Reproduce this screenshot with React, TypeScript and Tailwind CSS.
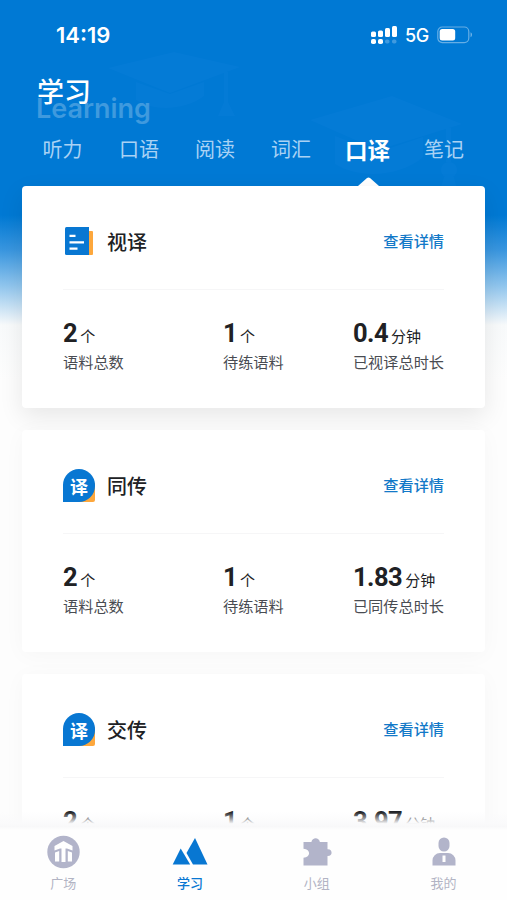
import clsx from 'clsx';

const tabs = [
  { name: '听力', pos: 'w-[77px]' },
  { name: '口语', pos: 'w-[76px]' },
  { name: '阅读', pos: 'w-[76px]' },
  { name: '词汇', pos: 'w-[76px]' },
  { name: '口译', pos: 'w-[77px]' },
  { name: '笔记', pos: 'w-[76px]' },
];

const cards = [
  { title: '视译', icon: 'doc', minutes: '0.4', label: '已视译总时长' },
  { title: '同传', icon: 'bubble', minutes: '1.83', label: '已同传总时长' },
  { title: '交传', icon: 'bubble', minutes: '3.97', label: '已交传总时长' },
];

function StatusBar() {
  return (
    <div className="flex h-[70px] items-center justify-between pl-14 pr-[34px] text-white">
      <p className="font-[Inter] text-[22px] font-semibold leading-none">
        14:19
      </p>
      <div className="flex items-center">
        <svg width="27" height="20" viewBox="0 0 27 20" fill="currentColor">
          <rect x="0" y="6.5" width="5" height="5.5" rx="1.5" />
          <rect x="7" y="5.5" width="5" height="6.5" rx="1.5" />
          <rect x="14" y="3" width="5" height="9" rx="1.5" />
          <rect x="21" y="1" width="5" height="11" rx="1.5" />
          <rect x="0" y="14" width="5" height="5" rx="1.8" />
          <rect x="7" y="14" width="5" height="5" rx="1.8" />
          <rect x="14" y="14.5" width="4.5" height="4" rx="1.8" opacity=".25" />
          <rect x="21" y="14.5" width="4.5" height="4" rx="1.8" opacity=".25" />
        </svg>
        <p className="ml-[7px] w-[26px] pt-px font-[Inter] text-[18px] font-medium leading-none tracking-[-0.3px]">
          5G
        </p>
        <svg className="ml-[6px]" width="36" height="18" viewBox="0 0 36 18">
          <rect
            x=".8"
            y="1"
            width="31"
            height="15.6"
            rx="4.5"
            fill="none"
            stroke="#fff"
            strokeOpacity=".4"
            strokeWidth="1.2"
          />
          <rect x="2.7" y="3" width="15.5" height="11.6" rx="2.5" fill="#fff" />
          <path d="M33.6 6.3c1.7.7 1.7 4.3 0 5z" fill="#fff" opacity=".5" />
        </svg>
      </div>
    </div>
  );
}

// faint graduation caps behind the header
function HeaderPattern() {
  return (
    <svg
      className="absolute left-0 top-0"
      width="507"
      height="230"
      viewBox="0 0 507 230"
      fill="#2b8df0"
    >
      <g opacity=".1">
        <path d="M108 68 174 52l66 15-70 26z" />
        <path d="M136 82v18c18 12 50 10 68-4V82l-34 12z" />
        <path d="M224 72h4v30l7 14h-17l6-14z" />
        <path d="m310 120 82-24 70 28-84 26z" />
        <path d="M335 136v28c25 16 67 12 88-7v-20l-45 15z" />
        <path d="M446 128h5v34h-5z" />
        <circle cx="449" cy="170" r="8" />
        <path d="m444 177-6 20h21l-5-20z" />
      </g>
    </svg>
  );
}

function DocIcon() {
  return (
    <svg width="32" height="32" viewBox="0 0 32 32">
      <path d="M23 6h6a1 1 0 0 1 1 1v22a1 1 0 0 1-1 1h-6z" fill="#fda73c" />
      <path
        d="M3.500 2H26v28H3.500A1.500 1.500 0 0 1 2 28.500v-25A1.500 1.500 0 0 1 3.500 2z"
        fill="#0877d2"
      />
      <path
        d="M6.500 10.800h6M6.500 17.300h14.500M6.500 23.600h8"
        stroke="#fff"
        strokeWidth="2.200"
      />
    </svg>
  );
}

function BubbleIcon() {
  return (
    <div className="flex h-[33px] w-8 items-center justify-center rounded-[2px] bg-[linear-gradient(135deg,transparent_70%,#fda73c_70%)]">
      <div className="flex h-[33px] w-8 items-center justify-center rounded-full rounded-bl-[3px] bg-[#0877d2]">
        <span className="pt-[2px] text-[18px] font-bold leading-none text-white">
          译
        </span>
      </div>
    </div>
  );
}

function Stat({
  value,
  unit,
  label,
}: {
  value: string;
  unit: string;
  label: string;
}) {
  return (
    <div>
      <p className="flex h-[30px] items-baseline gap-[3px] text-[#202124]">
        <span className="font-[Roboto] text-[25.5px] font-bold leading-[30px] tracking-[-0.5px]">
          {value}
        </span>
        <span className="text-[15px] leading-none">{unit}</span>
      </p>
      <p className="mt-[3px] whitespace-nowrap text-[15.2px] leading-5 text-[#494c52]">
        {label}
      </p>
    </div>
  );
}

function Card({ card, first }: { card: (typeof cards)[0]; first: boolean }) {
  return (
    <div
      className={clsx(
        'relative h-[222px] shrink-0 rounded-[4px] bg-white px-[41px]',
        first
          ? 'shadow-[0_8px_24px_rgba(0,0,0,0.09)]'
          : 'shadow-[0_3px_22px_rgba(0,0,0,0.03)]',
      )}
    >
      <div className="flex h-[104px] items-center justify-between border-b border-[#f6f6f7] pt-[7px]">
        <div className="flex items-center gap-3">
          {card.icon === 'doc' ? <DocIcon /> : <BubbleIcon />}
          <p className="pt-px text-[20px] font-medium leading-7 text-[#202124]">
            {card.title}
          </p>
        </div>
        <p className="pb-[2px] text-[15.200px] font-medium text-[#1379c8]">
          查看详情
        </p>
      </div>
      <div className="flex pt-[28px]">
        <div className="w-[160px]">
          <Stat value="2" unit="个" label="语料总数" />
        </div>
        <div className="w-[130px]">
          <Stat value="1" unit="个" label="待练语料" />
        </div>
        <Stat value={card.minutes} unit="分钟" label={card.label} />
      </div>
    </div>
  );
}

function SquareIcon() {
  return (
    <svg width="34" height="34" viewBox="0 0 34 34">
      <circle cx="17.500" cy="17" r="16.200" fill="#b2b4ca" />
      <path
        d="M17.500 6 26.500 11v4.500L21 13.500h-7l-5.500 2V11z"
        fill="#fff"
      />
      <path
        d="M9 17.500 13.200 16v10.500H9zM15.500 12h4v15h-4zM21.800 16l4.200 1.500v9h-4.200z"
        fill="#fff"
      />
    </svg>
  );
}

function StudyIcon() {
  return (
    <svg width="36" height="34" viewBox="0 0 36 34" fill="#0877d2">
      <path d="M.7 29.500 8.700 13.500 18.200 29.500z" />
      <path d="M14.500 18 23 3 35.500 29.500H21z" />
    </svg>
  );
}

function PuzzleIcon() {
  return (
    <svg width="34" height="34" viewBox="0 0 34 34" fill="#b2b4ca">
      <path d="M3.500 7h7.900c1-5 7.500-5 8.500 0h7.600v7.300c5.500-.4 5.500 7.200 0 6.800v9.400h-24v-7.700c7.500-.4 7.500-8.600 0-9z" />
    </svg>
  );
}

function MineIcon() {
  return (
    <svg width="34" height="34" viewBox="0 0 34 34" fill="#b2b4ca">
      <rect x="11.500" y="2.500" width="11" height="14" rx="5.500" />
      <path
        fillRule="evenodd"
        d="M13 18h8a7.500 7.500 0 0 1 7.500 7.500v5h-23v-5A7.500 7.500 0 0 1 13 18zM15.500 20.500v6.500h3v-6.500z"
      />
    </svg>
  );
}

const navItems = [
  { name: '广场', icon: <SquareIcon /> },
  { name: '学习', icon: <StudyIcon /> },
  { name: '小组', icon: <PuzzleIcon /> },
  { name: '我的', icon: <MineIcon /> },
];

export default function App() {
  return (
    <div
      lang="zh-CN"
      className="relative flex h-[900px] w-[507px] flex-col overflow-hidden bg-[linear-gradient(#0079d4_0px,#0079d4_215px,#3996df_250px,#93c7ee_287px,#f8fafb_325px,#fdfdfd_380px)] font-['Noto_Sans_CJK_SC',sans-serif]"
    >
      <HeaderPattern />
      <div className="relative h-[186px] shrink-0">
        <StatusBar />
        <div className="relative h-[57px] pl-[37px]">
          <p className="absolute left-[36px] top-[23px] font-[Inter] text-[27px] font-semibold leading-8 text-white/25">
            Learning
          </p>
          <p className="relative pt-[5px] text-[27px] font-medium leading-8 text-white">
            学习
          </p>
        </div>
        <div className="flex h-11 items-center pl-[24px]">
          {tabs.map((tab) => (
            <p
              key={tab.name}
              className={clsx(
                'text-center leading-7',
                tab.pos,
                tab.name === '口译'
                  ? 'text-[22.500px] font-bold text-white'
                  : 'text-[20px] text-[#a9d2f4]',
              )}
            >
              {tab.name}
            </p>
          ))}
        </div>
        <svg
          className="absolute bottom-0 left-[358px]"
          width="21"
          height="9"
          viewBox="0 0 21 9"
          fill="#fff"
        >
          <path d="M0 9 9 1q1.500-1.200 3 0L21 9z" />
        </svg>
      </div>
      <div className="flex min-h-0 grow flex-col gap-[22px] px-[22px]">
        {cards.map((card, i) => (
          <Card key={card.title} card={card} first={i === 0} />
        ))}
      </div>
      <div className="relative h-[72px] shrink-0 bg-[#fefefe]">
        {/* cards fade out above the bar */}
        <div className="absolute -top-[16px] left-0 h-[18px] w-full bg-[linear-gradient(rgba(255,255,255,0),#fafafb_65%,#f8f8f9_80%,#fefefe)]" />
        <div className="relative flex h-full pt-[7px]">
          {navItems.map((item) => (
            <div key={item.name} className="flex flex-1 flex-col items-center">
              {item.icon}
              <p
                className={clsx(
                  'mt-[5px] text-[13px] leading-[18px]',
                  item.name === '学习'
                    ? 'font-medium text-[#0877d2]'
                    : 'text-[#b2b4c4]',
                )}
              >
                {item.name}
              </p>
            </div>
          ))}
        </div>
      </div>
    </div>
  );
}
